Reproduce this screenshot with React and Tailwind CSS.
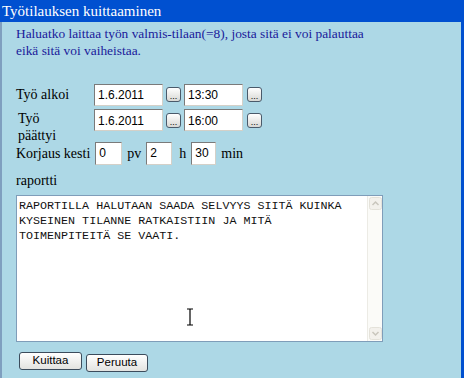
// App.jsx
const serif = { fontFamily: '"Liberation Serif", "Times New Roman", serif' };

function TextBox({ value, className }) {
  return (
    <div
      className={`bg-white border border-t-[#7a7a7a] border-l-[#7a7a7a] border-r-[#d4d0c8] border-b-[#d4d0c8] pl-[3px] flex items-center text-[12px] text-black font-['Liberation_Sans',Arial,sans-serif] ${className}`}
    >
      {value}
    </div>
  );
}

function DotButton() {
  return (
    <div className="w-[15px] h-[15px] rounded-[3px] border border-[#4a5a6a] bg-gradient-to-b from-white to-[#d8d8d4] flex items-end justify-center text-[9px] leading-[10px] text-black font-['Liberation_Sans',Arial,sans-serif]">
      ...
    </div>
  );
}

function App() {
  return (
    <div className="w-[466px] h-[381px] bg-white overflow-hidden">
      <div className="w-[464px] h-[378px] bg-[#add8e6] border-l-2 border-l-[#7f9fbf] border-r-[3px] border-r-[#0050d0] flex flex-col" style={serif}>
        {/* Title */}
        <div className="h-[22px] bg-[#0050d0] text-white text-[15px] leading-[22px] pl-[2px] -ml-[2px] -mr-[1px]">
          Työtilauksen kuittaaminen
        </div>

        <div className="pl-[14px] pt-[3px] text-[13.4px] leading-[17px] text-[#1a1a9a] w-[380px]">
          Haluatko laittaa työn valmis-tilaan(=8), josta sitä ei voi palauttaa eikä sitä voi vaiheistaa.
        </div>

        {/* Form */}
        <div className="pl-[14px] mt-[24px] text-[14px] text-black">
          <div className="flex items-center h-[23px]">
            <div className="w-[78px]">Työ alkoi</div>
            <TextBox value="1.6.2011" className="w-[69px] h-[22px]" />
            <div className="ml-[3px]"><DotButton /></div>
            <TextBox value="13:30" className="w-[59px] h-[22px] ml-[3px]" />
            <div className="ml-[4px]"><DotButton /></div>
          </div>
          <div className="flex items-start mt-[3px]">
            <div className="w-[78px] pl-[2px] leading-[17px] pt-[1px]">
              Työ
              <br />
              päättyi
            </div>
            <TextBox value="1.6.2011" className="w-[69px] h-[22px] items-start pt-[2px]" />
            <div className="ml-[3px] mt-[4px]"><DotButton /></div>
            <TextBox value="16:00" className="w-[59px] h-[22px] ml-[3px] items-start pt-[2px]" />
            <div className="ml-[4px] mt-[4px]"><DotButton /></div>
          </div>
          <div className="flex items-center h-[24px] -mt-[3px]">
            <div className="mr-[5px]">Korjaus kesti</div>
            <TextBox value="0" className="w-[27px] h-[23px] items-start pt-[1px]" />
            <div className="ml-[5px] mr-[5px]">pv</div>
            <TextBox value="2" className="w-[26px] h-[23px]" />
            <div className="ml-[7px] mr-[5px]">h</div>
            <TextBox value="30" className="w-[25px] h-[23px] items-start pt-[1px]" />
            <div className="ml-[5px]">min</div>
          </div>
        </div>

        <div className="pl-[14px] mt-[7px] text-[14px] text-black leading-[17px]">raportti</div>

        {/* Report textarea */}
        <div className="ml-[14px] mt-[6px] w-[367px] h-[147px] bg-white border border-[#7f9db9] flex relative">
          <div className="flex-1 pl-[2px] pt-[3px] text-[11.7px] leading-[15px] text-[#111] font-['Liberation_Mono','Courier_New',monospace]">
            RAPORTILLA HALUTAAN SAADA SELVYYS SIITÄ KUINKA
            <br />
            KYSEINEN TILANNE RATKAISTIIN JA MITÄ
            <br />
            TOIMENPITEITÄ SE VAATI.
          </div>
          <div className="w-[15px] h-full bg-[#fbfbf8] border-l border-[#ecebe5] flex flex-col justify-between items-center py-[1px]">
            <svg width="13" height="13" viewBox="0 0 13 13">
              <rect x="0.5" y="0.5" width="12" height="12" rx="2" fill="#f3f1ec" stroke="#e4e2da" />
              <path d="M3.5 8 L6.5 5 L9.5 8" fill="none" stroke="#c9c6bd" strokeWidth="1.5" />
            </svg>
            <svg width="13" height="13" viewBox="0 0 13 13">
              <rect x="0.5" y="0.5" width="12" height="12" rx="2" fill="#f3f1ec" stroke="#e4e2da" />
              <path d="M3.5 5 L6.5 8 L9.5 5" fill="none" stroke="#c9c6bd" strokeWidth="1.5" />
            </svg>
          </div>
          {/* I-beam cursor */}
          <svg className="absolute left-[169px] top-[112px]" width="8" height="18" viewBox="0 0 8 18">
            <path d="M1 1 H7 M4 1 V17 M1 17 H7" fill="none" stroke="#000" strokeWidth="1.2" />
          </svg>
        </div>

        {/* Buttons */}
        <div className="flex items-start gap-[4px] ml-[17px] mt-[10px] font-['Liberation_Sans',Arial,sans-serif] text-[11.5px] text-black">
          <div className="w-[63px] h-[18px] rounded-[3px] border border-[#3c4c5c] bg-gradient-to-b from-white to-[#e3e3e0] flex items-center justify-center">
            Kuittaa
          </div>
          <div className="w-[62px] h-[18px] mt-[2px] rounded-[3px] border border-[#3c4c5c] bg-gradient-to-b from-white to-[#e3e3e0] flex items-center justify-center">
            Peruuta
          </div>
        </div>
      </div>
    </div>
  );
}

export default App;
